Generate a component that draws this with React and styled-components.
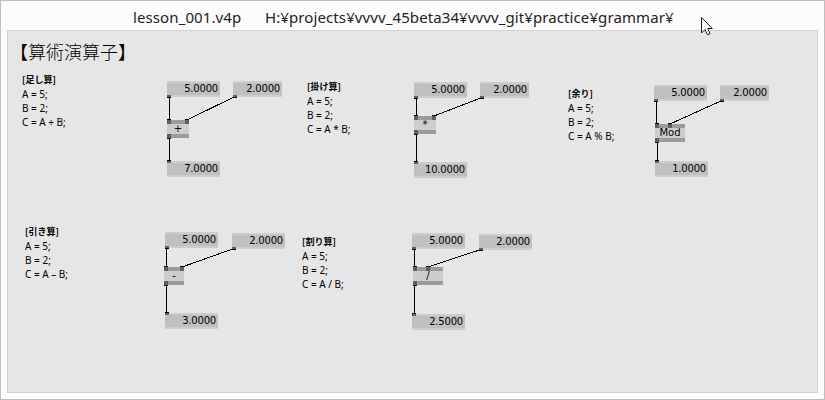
import React from "react";
import styled, { createGlobalStyle } from "styled-components";

const GlobalStyle = createGlobalStyle`
  * { box-sizing: border-box; }
  body { margin: 0; background: #fcfcfc; }
`;

const Window = styled.main`
  position: relative;
  display: flex;
  flex-direction: column;
  width: 825px;
  height: 400px;
  padding: 0 6px 6px;
  border: 1px solid #bebebe;
  background: #fcfcfc;
  overflow: hidden;
`;

const TitleBar = styled.header`
  display: flex;
  justify-content: flex-start;
  gap: 20px;
  height: 29px;
  padding: 6px 0 0 126px;
  flex: none;
  color: #222;
  font: 15px/20px "Noto Sans", "Noto Sans CJK JP", sans-serif;
  white-space: pre;
`;

const FileName = styled.span`
  width: 112px;
  letter-spacing: 0.1px;
`;

const FilePath = styled.span`
  letter-spacing: 0.1px;
`;

const Canvas = styled.section`
  position: relative;
  flex: 1;
  border: 1px solid #d2d2d2;
  background: #e6e6e6;
  overflow: hidden;
`;

/* Patch coordinates are window coordinates; the canvas starts at (8, 31). */
const Placed = styled.div`
  position: absolute;
  left: ${(p) => p.$x - 8}px;
  top: ${(p) => p.$y - 31}px;
`;

const Heading = styled(Placed).attrs({ as: "h1" })`
  margin: 0;
  color: #000;
  font: 300 18px/24px "Noto Sans CJK JP", sans-serif;
  white-space: nowrap;
`;

const Note = styled(Placed)`
  display: flex;
  flex-direction: column;
  color: #000;
  font: 10px/14px "Noto Sans", "Noto Sans CJK JP", sans-serif;
  white-space: pre;
`;

const NoteTitle = styled.span`
  font: 700 9px/14px "Noto Sans CJK JP", sans-serif;
`;

const IOBox = styled(Placed)`
  width: ${(p) => p.$w}px;
  height: 16px;
  padding-right: 2px;
  border: solid #cdcdcd;
  border-width: 2px 0;
  background: #c0c0c0;
  color: #000;
  font: 10px/12px "DejaVu Sans", sans-serif;
  letter-spacing: -0.2px;
  text-align: right;
`;

const Operator = styled(Placed)`
  width: ${(p) => p.$w}px;
  height: 18px;
  border: solid #9b9b9b;
  border-width: 4px 0;
  background: #cdcdcd;
  color: #000;
  font: ${(p) => p.$size}px/10px "DejaVu Sans", sans-serif;
  text-align: center;
`;

const Pin = styled(Placed)`
  width: 4px;
  height: ${(p) => p.$h + 1}px;
  background: #606060;
  border: 0 solid #000;
  border-${(p) => p.$cap}-width: 1px;
`;

const Links = styled.svg`
  position: absolute;
  left: -8px;
  top: -31px;
  width: 825px;
  height: 400px;
  stroke: #000;
  fill: none;
  shape-rendering: crispEdges;
`;

const Pointer = styled.svg`
  position: absolute;
  left: 699px;
  top: 15px;
  width: 13px;
  height: 20px;
`;

const patches = [
  { name: "足し算", sign: "+", note: [22, 73], a: [167, 81, 53], b: [233, 81, 49], op: [167, 120, 22, 185], out: [167, 161], top: 169, bottom: 169, result: "7.0000" },
  { name: "掛け算", sign: "*", note: [307, 80], a: [414, 82, 53], b: [480, 82, 49], op: [414, 116, 22, 432], out: [414, 162], top: 416, bottom: 416, result: "10.0000" },
  { name: "余り", sign: "%", label: "Mod", note: [568, 87], a: [654, 85, 53], b: [720, 85, 49], op: [655, 124, 30, 668], out: [655, 161], top: 656, bottom: 657, result: "1.0000" },
  { name: "引き算", sign: "–", label: "-", note: [25, 225], a: [165, 232, 53], b: [232, 233, 53], op: [164, 267, 20, 180], out: [165, 313], top: 166, bottom: 166, result: "3.0000" },
  { name: "割り算", sign: "/", note: [302, 235], a: [412, 233, 53], b: [479, 234, 53], op: [413, 267, 30, 426], out: [412, 314], top: 414, bottom: 414, result: "2.5000" },
];

function Patch({ name, sign, label = sign, note, a, b, op, out, result }) {
  const [ox, oy, ow, pin] = op;
  return (
    <>
      <Note $x={note[0]} $y={note[1]}>
        <NoteTitle>[{name}]</NoteTitle>
        <span>A = 5;</span>
        <span>B = 2;</span>
        <span>C = A {sign} B;</span>
      </Note>
      <IOBox $x={a[0]} $y={a[1]} $w={a[2]}>5.0000</IOBox>
      <IOBox $x={b[0]} $y={b[1]} $w={b[2]}>2.0000</IOBox>
      <Operator $x={ox} $y={oy} $w={ow} $size={10}>{label}</Operator>
      <IOBox $x={out[0]} $y={out[1]} $w={53}>{result}</IOBox>
      <Pin $x={a[0]} $y={a[1] + 14} $h={2} $cap="bottom" />
      <Pin $x={b[0]} $y={b[1] + 14} $h={2} $cap="bottom" />
      <Pin $x={ox} $y={oy - 1} $h={4} $cap="top" />
      <Pin $x={pin} $y={oy - 1} $h={4} $cap="top" />
      <Pin $x={ox} $y={oy + 14} $h={4} $cap="bottom" />
      <Pin $x={out[0]} $y={out[1] - 1} $h={2} $cap="top" />
    </>
  );
}

export default function App() {
  return (
    <>
      <GlobalStyle />
      <Window>
        <TitleBar>
          <FileName>lesson_001.v4p</FileName>
          <FilePath>H:¥projects¥vvvv_45beta34¥vvvv_git¥practice¥grammar¥</FilePath>
        </TitleBar>
        <Canvas>
          <Heading $x={10} $y={39}>【算術演算子】</Heading>
          <Links viewBox="0 0 825 400">
            {patches.map(({ name, a, b, op, out, top, bottom }) => (
              <path
                key={name}
                d={`M${top + 0.5} ${a[1] + 16}V${op[1]}M${b[0] + 2} ${b[1] + 15.5}L${op[3] + 2} ${op[1]}M${bottom + 0.5} ${op[1] + 18}V${out[1]}`}
              />
            ))}
          </Links>
          {patches.map((patch) => (
            <Patch key={patch.name} {...patch} />
          ))}
        </Canvas>
        <Pointer viewBox="0 0 13 20">
          <path d="M1.5 1.5V17L5 13.5L7.5 18.8L10 17.7L7.7 12.5H12.3Z" fill="#fff" stroke="#1c1c2c" />
        </Pointer>
      </Window>
    </>
  );
}
